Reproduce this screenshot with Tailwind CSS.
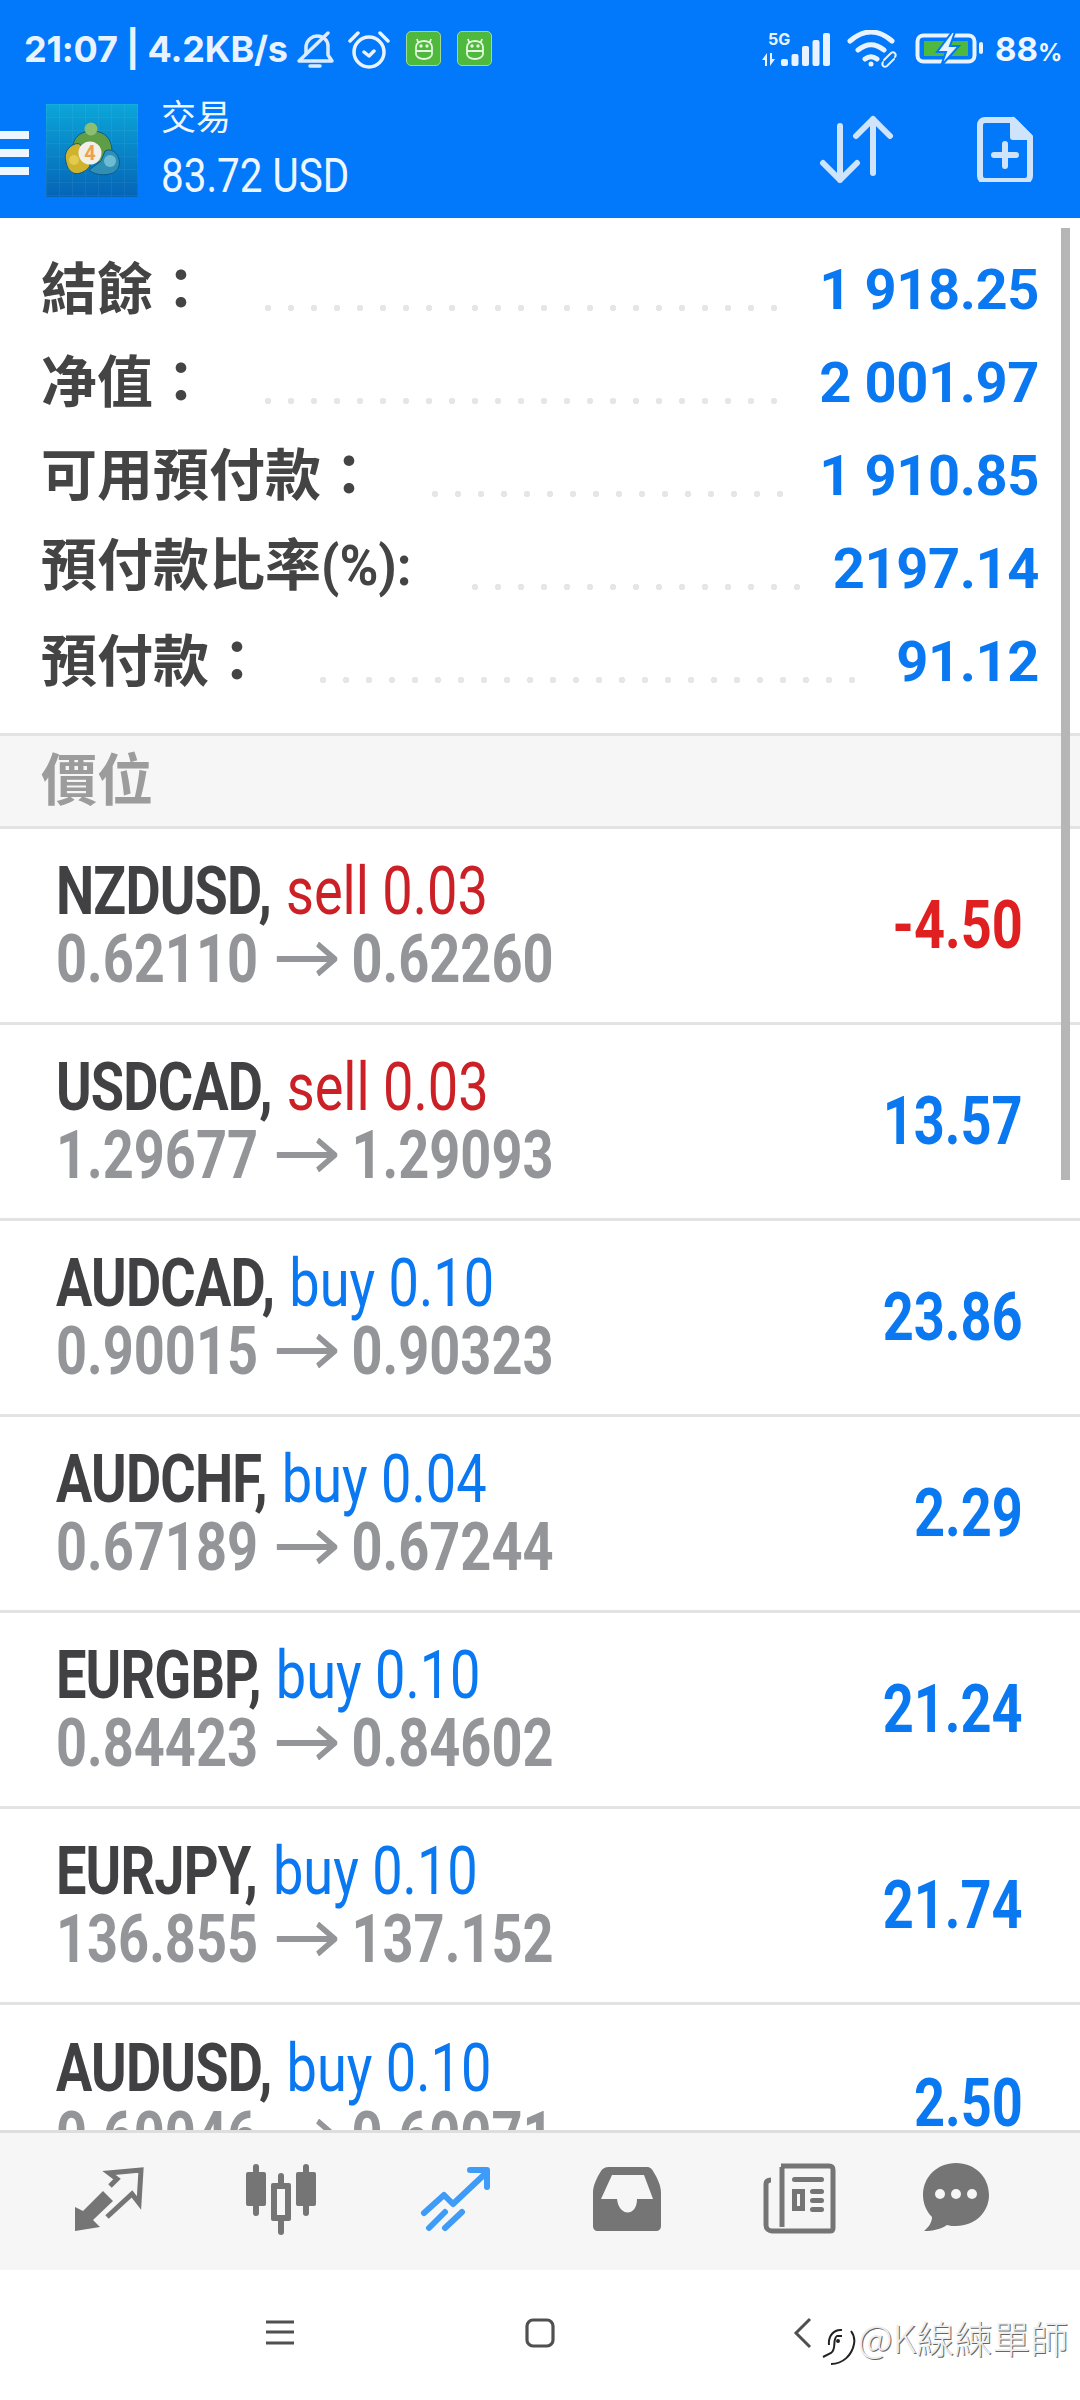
<!DOCTYPE html>
<html><head><meta charset="utf-8"><script src="https://cdn.jsdelivr.net/npm/@tailwindcss/browser@4"></script></head>
<body class="m-0 bg-white">
<div class="relative w-[1080px] h-[2400px] overflow-hidden bg-white flex flex-col font-['Roboto','Noto_Sans_CJK_TC',sans-serif]">
 <!-- status + app bar -->
 <header class="relative h-[218px] shrink-0 bg-[#0278fb] text-[#e8f3ff]">
  <div class="absolute left-[24px] top-[28px] flex items-center text-[36px] font-bold font-['Inter','Roboto',sans-serif] leading-[42px] tracking-[-0.2px] whitespace-nowrap">21:07 | 4.2KB/s</div>
  <svg class="absolute left-[296px] top-[30px]" width="38" height="40" viewBox="0 0 38 40" fill="none" stroke="#dcebff" stroke-width="3.5" stroke-linecap="round" stroke-linejoin="round"><path d="M3 31h33l-4-6V16c0-6-5-10-11-10-5 0-10 4-11 10v8"/><path d="M4 30 32 3"/><path d="M14 36h10"/></svg>
  <svg class="absolute left-[348px] top-[29px]" width="42" height="42" viewBox="0 0 42 42" fill="none" stroke="#e8f3ff" stroke-width="3.5" stroke-linecap="round" stroke-linejoin="round"><circle cx="21" cy="23" r="15"/><path d="M2 12 10 4M40 12 32 4M16 23l5 4 5-5"/></svg>
  <div class="absolute left-[406px] top-[31px] w-[35px] h-[35px] rounded-[5px] bg-[#4eb93c] border border-[#9fdc92] flex items-center justify-center"><svg width="24" height="26" viewBox="0 0 24 26" fill="none" stroke="#e4f6df" stroke-width="1.8"><path d="M4 11c0-4 4-6 8-6s8 2 8 6v7c0 3-4 5-8 5s-8-2-8-5zM4 15h16M6 6 5 3M18 6l1-3"/><circle cx="9" cy="10" r=".8"/><circle cx="15" cy="10" r=".8"/></svg></div>
  <div class="absolute left-[457px] top-[31px] w-[35px] h-[35px] rounded-[5px] bg-[#4eb93c] border border-[#9fdc92] flex items-center justify-center"><svg width="24" height="26" viewBox="0 0 24 26" fill="none" stroke="#e4f6df" stroke-width="1.8"><path d="M4 11c0-4 4-6 8-6s8 2 8 6v7c0 3-4 5-8 5s-8-2-8-5zM4 15h16M6 6 5 3M18 6l1-3"/><circle cx="9" cy="10" r=".8"/><circle cx="15" cy="10" r=".8"/></svg></div>
  <!-- right status -->
  <svg class="absolute left-[760px] top-[30px]" width="74" height="38" viewBox="0 0 74 38" fill="#e8f3ff"><text x="8" y="15" font-size="16" font-weight="700" font-family="Inter,Roboto,sans-serif">5G</text><path d="M7 36V23l-5 7h3v6zM10 23v13l5-7h-3v-6z"/><rect x="21" y="29" width="7" height="7" rx="2"/><rect x="31.500" y="24" width="7" height="12" rx="2"/><rect x="42" y="16" width="7" height="20" rx="2"/><rect x="52.500" y="10" width="7" height="26" rx="2"/><rect x="63" y="3" width="7" height="33" rx="2"/></svg>
  <svg class="absolute left-[845px] top-[30px]" width="56" height="40" viewBox="0 0 56 40" fill="none" stroke="#e8f3ff" stroke-width="5" stroke-linecap="round"><path d="M5 11C19-1 33-1 47 11M13 20c9-7 17-7 26 0M20 29c4-3 8-3 12 0"/><circle cx="26" cy="34" r="2.5" fill="#e8f3ff" stroke="none"/><path d="M39 30l7-7c3-2 6 1 4 4M49 29l-7 7c-3 2-6-1-4-4" stroke-width="2"/></svg>
  <svg class="absolute left-[915px] top-[30px]" width="70" height="40" viewBox="0 0 70 40"><rect x="2.500" y="5.500" width="57" height="26" rx="6" fill="none" stroke="#e8f3ff" stroke-width="4"/><rect x="9" y="11" width="44" height="15" fill="#4eb93c"/><rect x="64" y="12" width="4" height="12" rx="2" fill="#e8f3ff"/><path d="M37 2 22 22h9l-5 14 18-20h-9l5-14z" fill="#e8f3ff" stroke="#0278fb" stroke-width="2"/></svg>
  <div class="absolute left-[995px] top-[28px] text-[33px] leading-[42px] font-bold font-['Inter',sans-serif] text-[#eef6ff] whitespace-nowrap">88<span class="text-[24px]">%</span></div>
  <!-- hamburger -->
  <div class="absolute left-0 top-[131px] w-[29px] flex flex-col gap-[10px]"><div class="h-[8px] bg-[#eef6ff]"></div><div class="h-[8px] bg-[#eef6ff]"></div><div class="h-[8px] bg-[#eef6ff]"></div></div>
  <!-- logo -->
  <div class="absolute left-[46px] top-[104px] w-[92px] h-[93px] bg-[linear-gradient(#ffffff0d_1px,transparent_1px),linear-gradient(90deg,#ffffff0d_1px,transparent_1px),linear-gradient(#0ba6d9,#0564b6)] bg-[length:13px_13px,13px_13px,100%_100%] flex items-center justify-center">
   <svg width="58" height="58" viewBox="0 0 58 58" stroke="#0a5a8c" stroke-width="1"><path d="M9 30C9 15 18 9 29 9s20 6 20 21l-8 10H18z" fill="#5f9e45"/><circle cx="28" cy="7" r="6.500" fill="#8cc070" stroke="none"/><path d="M3 40c-3-9 3-16 9-18 5-2 8 3 9 8l6 14c-4 6-12 9-17 7-4-2-6-6-7-11z" fill="#cfb32c"/><path d="M42 29c6-3 12 1 14 8 2 8-3 14-9 15-8 2-17 0-21-4l12-9z" fill="#2f8fb5"/><circle cx="47" cy="39" r="6" fill="#6dbcd6" stroke="none"/><circle cx="11" cy="38" r="5" fill="#e3cb50" stroke="none"/><circle cx="27" cy="31" r="11.500" fill="#f2efe9" stroke="none"/><text x="27" y="38" text-anchor="middle" font-size="20" font-weight="700" fill="#f0a04b" stroke="none" font-family="Roboto,sans-serif">4</text></svg>
  </div>
  <div class="absolute left-[161px] top-[93px] text-[35px] leading-[44px] text-[#eef6ff] font-['Noto_Sans_CJK_TC',sans-serif]">交易</div>
  <div class="absolute left-[161px] top-[149px] text-[49px] leading-[54px] text-[#eef6ff] scale-x-[0.825] origin-left whitespace-nowrap">83.72 USD</div>
  <!-- actions -->
  <svg class="absolute left-[818px] top-[113px]" width="76" height="72" viewBox="0 0 76 72" fill="none" stroke="#cfe3fb" stroke-width="6" stroke-linecap="round" stroke-linejoin="round"><path d="M22 13v54M5 50l17 17 17-17M55 6v54M38 23 55 6l17 17"/></svg>
  <svg class="absolute left-[977px] top-[114px]" width="56" height="68" viewBox="0 0 56 68" fill="none" stroke="#cfe3fb" stroke-width="6" stroke-linejoin="round"><path d="M8 6h28l17 17v39c0 3-2 5-5 5H8c-3 0-5-2-5-5V11c0-3 2-5 5-5z"/><path d="M36 6v17h17z" fill="#cfe3fb"/><path d="M17 41h22M28 30v22" stroke-linecap="round"/></svg>
 </header>

 <main class="relative flex-1 overflow-hidden">
  <!-- scrollbar -->
  <div class="absolute right-[10px] top-[10px] w-[9px] h-[952px] bg-[#b6b6b6] z-10"></div>

  <!-- summary -->
  <section class="h-[515px] pt-[25px] pl-[41px] pr-[41px]">
   <div class="h-[93px] flex items-center">
    <span class="text-[56px] leading-none pb-[10px] font-bold text-[#444] font-['Noto_Sans_CJK_TC',sans-serif] whitespace-nowrap w-[224px]">結餘：</span>
    <div class="w-[512px] h-[8px] mt-[36px] bg-[radial-gradient(circle_at_3px_4px,#e6e6e6_3px,transparent_3.5px)] bg-[length:23px_8px] bg-repeat-x"></div>
    <span class="ml-auto text-[56px] leading-none font-bold tracking-[-0.4px] text-[#0a78f0] whitespace-nowrap">1 918.25</span>
   </div>
   <div class="h-[93px] flex items-center">
    <span class="text-[56px] leading-none pb-[10px] font-bold text-[#444] font-['Noto_Sans_CJK_TC',sans-serif] whitespace-nowrap w-[224px]">净值：</span>
    <div class="w-[512px] h-[8px] mt-[36px] bg-[radial-gradient(circle_at_3px_4px,#e6e6e6_3px,transparent_3.5px)] bg-[length:23px_8px] bg-repeat-x"></div>
    <span class="ml-auto text-[56px] leading-none font-bold tracking-[-0.4px] text-[#0a78f0] whitespace-nowrap">2 001.97</span>
   </div>
   <div class="h-[93px] flex items-center">
    <span class="text-[56px] leading-none pb-[10px] font-bold text-[#444] font-['Noto_Sans_CJK_TC',sans-serif] whitespace-nowrap w-[391px]">可用預付款：</span>
    <div class="w-[352px] h-[8px] mt-[36px] bg-[radial-gradient(circle_at_3px_4px,#e6e6e6_3px,transparent_3.5px)] bg-[length:23px_8px] bg-repeat-x"></div>
    <span class="ml-auto text-[56px] leading-none font-bold tracking-[-0.4px] text-[#0a78f0] whitespace-nowrap">1 910.85</span>
   </div>
   <div class="h-[93px] flex items-center">
    <span class="text-[56px] leading-none pb-[10px] font-bold text-[#444] font-['Noto_Sans_CJK_TC',sans-serif] whitespace-nowrap w-[431px]">預付款比率<span class="inline-block origin-left scale-x-[0.94] font-['Roboto',sans-serif] font-bold">(%):</span></span>
    <div class="w-[329px] h-[8px] mt-[36px] bg-[radial-gradient(circle_at_3px_4px,#e6e6e6_3px,transparent_3.5px)] bg-[length:23px_8px] bg-repeat-x"></div>
    <span class="ml-auto text-[56px] leading-none font-bold tracking-[-0.4px] text-[#0a78f0] whitespace-nowrap">2197.14</span>
   </div>
   <div class="h-[93px] flex items-center">
    <span class="text-[56px] leading-none pb-[10px] font-bold text-[#444] font-['Noto_Sans_CJK_TC',sans-serif] whitespace-nowrap w-[279px]">預付款：</span>
    <div class="w-[535px] h-[8px] mt-[36px] bg-[radial-gradient(circle_at_3px_4px,#e6e6e6_3px,transparent_3.5px)] bg-[length:23px_8px] bg-repeat-x"></div>
    <span class="ml-auto text-[56px] leading-none font-bold tracking-[-0.4px] text-[#0a78f0] whitespace-nowrap">91.12</span>
   </div>
  </section>

  <div class="h-[96px] bg-[#f6f6f6] border-y-[3px] border-[#e3e3e3] pl-[41px] pb-[10px] flex items-center text-[56px] leading-none font-bold text-[#9c9c9c] font-['Noto_Sans_CJK_TC',sans-serif]">價位</div>

  <!-- positions -->
  <div class="flex h-[196px] items-center justify-between border-b-[3px] border-[#e3e3e3] pl-[56px] pr-[57px]">
   <div class="w-[600px] origin-left scale-x-[0.82] whitespace-nowrap"><div class="text-[66px] leading-[68px] text-[#cc2027]"><span class="font-bold text-[#414042] tracking-[-1px]">NZDUSD,</span> <span class="ml-[2px]">sell 0.03</span></div><div class="text-[66px] leading-[68px] font-bold text-[#939598]">0.62110<svg class="inline-block align-[6px] ml-[23px] mr-[17px]" width="74" height="34" viewBox="0 0 74 34" fill="none" stroke="#939598" stroke-width="6"><path d="M0 17h70M50 2l21 15-21 15"/></svg>0.62260</div></div>
   <div class="text-[66px] font-bold text-[#e02020] origin-right scale-x-[0.82]">-4.50</div>
  </div>
  <div class="flex h-[196px] items-center justify-between border-b-[3px] border-[#e3e3e3] pl-[56px] pr-[57px]">
   <div class="w-[600px] origin-left scale-x-[0.82] whitespace-nowrap"><div class="text-[66px] leading-[68px] text-[#cc2027]"><span class="font-bold text-[#414042] tracking-[-1px]">USDCAD,</span> <span class="ml-[2px]">sell 0.03</span></div><div class="text-[66px] leading-[68px] font-bold text-[#939598]">1.29677<svg class="inline-block align-[6px] ml-[23px] mr-[17px]" width="74" height="34" viewBox="0 0 74 34" fill="none" stroke="#939598" stroke-width="6"><path d="M0 17h70M50 2l21 15-21 15"/></svg>1.29093</div></div>
   <div class="text-[66px] font-bold text-[#0a78f0] origin-right scale-x-[0.82]">13.57</div>
  </div>
  <div class="flex h-[196px] items-center justify-between border-b-[3px] border-[#e3e3e3] pl-[56px] pr-[57px]">
   <div class="w-[600px] origin-left scale-x-[0.82] whitespace-nowrap"><div class="text-[66px] leading-[68px] text-[#0a78f0]"><span class="font-bold text-[#414042] tracking-[-1px]">AUDCAD,</span> <span class="ml-[2px]">buy 0.10</span></div><div class="text-[66px] leading-[68px] font-bold text-[#939598]">0.90015<svg class="inline-block align-[6px] ml-[23px] mr-[17px]" width="74" height="34" viewBox="0 0 74 34" fill="none" stroke="#939598" stroke-width="6"><path d="M0 17h70M50 2l21 15-21 15"/></svg>0.90323</div></div>
   <div class="text-[66px] font-bold text-[#0a78f0] origin-right scale-x-[0.82]">23.86</div>
  </div>
  <div class="flex h-[196px] items-center justify-between border-b-[3px] border-[#e3e3e3] pl-[56px] pr-[57px]">
   <div class="w-[600px] origin-left scale-x-[0.82] whitespace-nowrap"><div class="text-[66px] leading-[68px] text-[#0a78f0]"><span class="font-bold text-[#414042] tracking-[-1px]">AUDCHF,</span> <span class="ml-[2px]">buy 0.04</span></div><div class="text-[66px] leading-[68px] font-bold text-[#939598]">0.67189<svg class="inline-block align-[6px] ml-[23px] mr-[17px]" width="74" height="34" viewBox="0 0 74 34" fill="none" stroke="#939598" stroke-width="6"><path d="M0 17h70M50 2l21 15-21 15"/></svg>0.67244</div></div>
   <div class="text-[66px] font-bold text-[#0a78f0] origin-right scale-x-[0.82]">2.29</div>
  </div>
  <div class="flex h-[196px] items-center justify-between border-b-[3px] border-[#e3e3e3] pl-[56px] pr-[57px]">
   <div class="w-[600px] origin-left scale-x-[0.82] whitespace-nowrap"><div class="text-[66px] leading-[68px] text-[#0a78f0]"><span class="font-bold text-[#414042] tracking-[-1px]">EURGBP,</span> <span class="ml-[2px]">buy 0.10</span></div><div class="text-[66px] leading-[68px] font-bold text-[#939598]">0.84423<svg class="inline-block align-[6px] ml-[23px] mr-[17px]" width="74" height="34" viewBox="0 0 74 34" fill="none" stroke="#939598" stroke-width="6"><path d="M0 17h70M50 2l21 15-21 15"/></svg>0.84602</div></div>
   <div class="text-[66px] font-bold text-[#0a78f0] origin-right scale-x-[0.82]">21.24</div>
  </div>
  <div class="flex h-[196px] items-center justify-between border-b-[3px] border-[#e3e3e3] pl-[56px] pr-[57px]">
   <div class="w-[600px] origin-left scale-x-[0.82] whitespace-nowrap"><div class="text-[66px] leading-[68px] text-[#0a78f0]"><span class="font-bold text-[#414042] tracking-[-1px]">EURJPY,</span> <span class="ml-[3px]">buy 0.10</span></div><div class="text-[66px] leading-[68px] font-bold text-[#939598]">136.855<svg class="inline-block align-[6px] ml-[23px] mr-[17px]" width="74" height="34" viewBox="0 0 74 34" fill="none" stroke="#939598" stroke-width="6"><path d="M0 17h70M50 2l21 15-21 15"/></svg>137.152</div></div>
   <div class="text-[66px] font-bold text-[#0a78f0] origin-right scale-x-[0.82]">21.74</div>
  </div>
  <div class="flex h-[196px] items-center justify-between pl-[56px] pr-[57px]">
   <div class="w-[600px] origin-left scale-x-[0.82] whitespace-nowrap"><div class="text-[66px] leading-[68px] text-[#0a78f0]"><span class="font-bold text-[#414042] tracking-[-1px]">AUDUSD,</span> <span class="ml-[2px]">buy 0.10</span></div><div class="text-[66px] leading-[68px] font-bold text-[#939598]">0.60046<svg class="inline-block align-[6px] ml-[23px] mr-[17px]" width="74" height="34" viewBox="0 0 74 34" fill="none" stroke="#939598" stroke-width="6"><path d="M0 17h70M50 2l21 15-21 15"/></svg>0.60071</div></div>
   <div class="text-[66px] font-bold text-[#0a78f0] origin-right scale-x-[0.82]">2.50</div>
  </div>
 </main>

 <!-- tab bar -->
 <nav class="relative h-[140px] shrink-0 bg-[#f6f6f6] border-t-[3px] border-[#dedede]">
  <svg class="absolute left-[74px] top-[34px]" width="70" height="64" viewBox="0 0 70 64"><path d="M1 40v24l25-4-7-7 20-19-10-10-20 20z" fill="#757575"/><path d="M36 19l7-7-8-6 32-3-2 33-7-9-25 23" fill="none" stroke="#757575" stroke-width="5"/></svg>
  <svg class="absolute left-[245px] top-[30px]" width="72" height="72" viewBox="0 0 72 72" fill="#757575"><rect x="1" y="9" width="20" height="34" rx="2"/><rect x="8" y="1" width="6" height="52" rx="3"/><rect x="51" y="9" width="20" height="34" rx="2"/><rect x="58" y="1" width="6" height="52" rx="3"/><rect x="33" y="10" width="6" height="62" rx="3"/><rect x="26" y="20" width="20" height="38" rx="2"/><rect x="32" y="26" width="8" height="26" fill="#f6f6f6"/></svg>
  <svg class="absolute left-[418px] top-[33px]" width="72" height="66" viewBox="0 0 72 66" fill="none" stroke="#3e9bf7" stroke-width="6" stroke-linecap="round" stroke-linejoin="round"><path d="M6 47 26 29l9 9L69 6M52 4h17v17M11 62 27 46M27 62 44 46"/></svg>
  <svg class="absolute left-[593px] top-[33px]" width="70" height="66" viewBox="0 0 70 66"><path d="M16 1h38c3 0 5 2 6 4 5 8 8 15 8 22v33c0 3-2 5-5 5H5c-3 0-5-2-5-5V27c0-7 3-14 8-22 1-2 4-4 8-4z" fill="#757575"/><path d="M19 9h32l9 24H44c0 18-18 18-20 0H8z" fill="#f6f6f6"/></svg>
  <svg class="absolute left-[763px] top-[29px]" width="74" height="72" viewBox="0 0 74 72"><g fill="none" stroke="#757575" stroke-width="5"><path d="M18 4h48c3 0 4 1 4 4v58c0 2-1 3-3 3H9c-3 0-6-2-6-6V22c0-2 1-4 5-4"/><path d="M19 5v60" /></g><rect x="29" y="15" width="32" height="5" rx="2.500" fill="#757575"/><rect x="29" y="27" width="13" height="22" fill="#757575"/><rect x="34" y="32" width="3" height="12" fill="#f6f6f6"/><rect x="47" y="27" width="14" height="5" rx="2.500" fill="#757575"/><rect x="47" y="36" width="14" height="5" rx="2.500" fill="#757575"/><rect x="47" y="45" width="14" height="5" rx="2.500" fill="#757575"/></svg>
  <svg class="absolute left-[921px] top-[29px]" width="70" height="70" viewBox="0 0 68 70"><path d="M34 1c19 0 33 14 33 32 0 17-14 31-33 31-3 0-6 0-9-1-6 4-14 6-23 6 5-4 8-9 8-14C4 49 1 41 1 33 1 15 15 1 34 1z" fill="#757575"/><circle cx="18" cy="32" r="5" fill="#f6f6f6"/><circle cx="34" cy="32" r="5" fill="#f6f6f6"/><circle cx="50" cy="32" r="5" fill="#f6f6f6"/></svg>
 </nav>

 <!-- nav bar -->
 <footer class="relative h-[130px] shrink-0 bg-white">
  <svg class="absolute left-[266px] top-[50px]" width="29" height="26" viewBox="0 0 29 26" fill="none" stroke="#505050" stroke-width="3"><path d="M0 2h28M0 12h28M0 23h28"/></svg>
  <svg class="absolute left-[525px] top-[48px]" width="30" height="30" viewBox="0 0 30 30" fill="none" stroke="#505050" stroke-width="3.200"><rect x="2" y="2" width="26" height="26" rx="6"/></svg>
  <svg class="absolute left-[793px] top-[47px]" width="20" height="32" viewBox="0 0 20 32" fill="none" stroke="#505050" stroke-width="3"><path d="M17 2 3 16l14 14"/></svg>
  <svg class="absolute left-[822px] top-[57px]" width="34" height="38" viewBox="0 0 34 38" fill="none" stroke="#222" stroke-width="2"><path d="M7 18C6 9 12 2 20 3M1 30l8-4c6-4 1-14 6-17h5M9 37c12 0 21-9 23-20 1-5 0-9-3-13"/><circle cx="16" cy="14" r="1" fill="#222"/></svg>
  <div class="absolute left-[858px] top-[44px] text-[38px] leading-[46px] text-[#ededed] whitespace-nowrap font-['Noto_Sans_CJK_TC',sans-serif] font-light [text-shadow:1px_1px_0_#666]">@K線練單師</div>
 </footer>
</div>
</body></html>
